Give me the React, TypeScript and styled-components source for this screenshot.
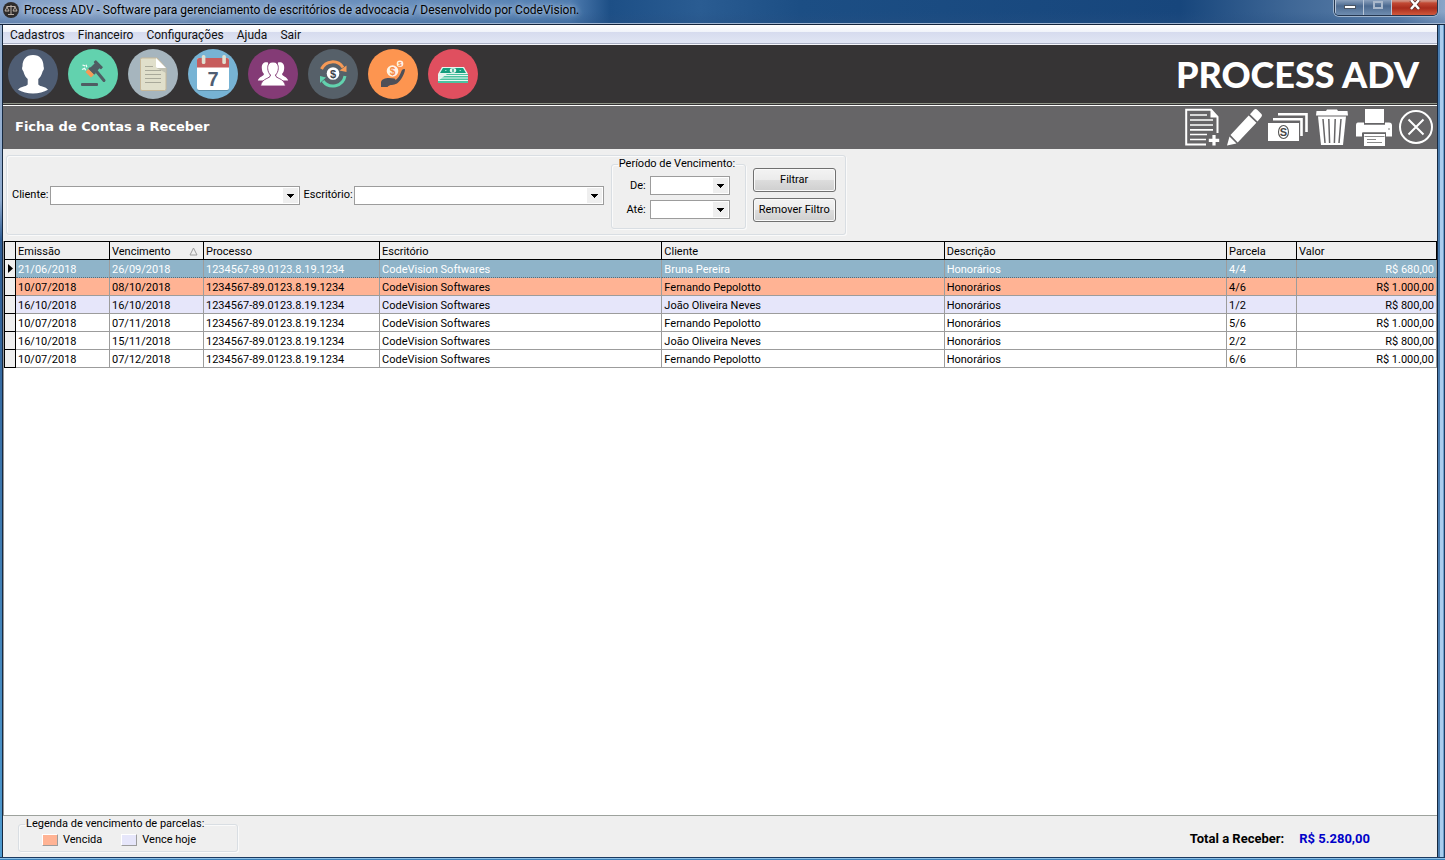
import React from "react";
import styled, { createGlobalStyle, css } from "styled-components";

const ui = `Roboto, "Liberation Sans", Arial, sans-serif`;

const GlobalStyle = createGlobalStyle`
  *, *::before, *::after { box-sizing: border-box; }
  body { margin: 0; font: 11px/14px ${ui}; color: #000; background: #efefef; }
  button, input, select { font: inherit; color: inherit; }
`;

const Window = styled.div`
  min-height: 100vh;
  display: flex;
  flex-direction: column;
  padding: 0 8px 3px 3px;
  background:
    linear-gradient(180deg, #1c3a60 0 1px, #8ec0e6 1px 2px, #3a80b8 2px 3px) bottom / 100% 3px no-repeat,
    linear-gradient(90deg, transparent 0 2px, #16283f 2px 3px) left / 3px 100% no-repeat,
    linear-gradient(180deg, #8aa4c8 0, #9db4d2 20px, #8fabcf 200px, #2f5d94 240px, #4f9bd0 100%) left / 3px 100% no-repeat,
    linear-gradient(90deg, #16283f 0 1px, #4a7db0 1px 3px, #a9cdee 3px 6px, #6f9fcb 6px 7px, #1c3a60 7px 8px) right / 8px 100% no-repeat;
`;

const TitleBar = styled.header`
  height: 25px;
  margin: 0 -8px 0 -3px;
  padding: 0 7px 0 3px;
  display: flex;
  align-items: flex-start;
  gap: 5px;
  border-bottom: 1px solid #14243c;
  box-shadow: inset 0 -1px #a3b8d3;
  background:
    linear-gradient(180deg, transparent 12px, rgba(40, 80, 130, 0.35)),
    linear-gradient(90deg, #7f9bc3 0, #92abcd 120px, #6f92bf 300px, #5f88b8 480px, #4f7cb0 570px, #1d4f86 610px, #2a5c92 700px, #1c4e84 800px, #17467c 1180px, #3f6796 1290px, #5f82ac 1400px, #8aa5c8 100%);
`;

const AppMark = styled.svg`
  width: 16px;
  height: 16px;
  margin-top: 2px;
`;

const Title = styled.h1`
  margin: 0;
  flex: 1;
  font: 400 12px/20px ${ui};
  text-shadow: 0 0 5px rgba(215, 228, 243, 0.9), 0 0 8px rgba(200, 217, 237, 0.8);
`;

const WindowControls = styled.div`
  display: flex;
  height: 16px;
  border: 1px solid #24364f;
  border-top: 0;
  border-radius: 0 0 5px 5px;
  box-shadow: 0 0 0 1px #9fb4cd;
  overflow: hidden;
`;

const ControlButton = styled.button<{ $close?: boolean }>`
  width: ${(p) => (p.$close ? 46 : 28)}px;
  padding: 0;
  border: 0;
  border-left: 1px solid #b8c6d8;
  display: flex;
  justify-content: center;
  background: ${(p) =>
    p.$close
      ? "linear-gradient(180deg, #d08f80 0 1px, #c24a35 3px, #a92c1c 8px, #d0583c 100%)"
      : "linear-gradient(180deg, #8aa0bc, #4c6a90 6px, #6f8db0 100%)"};
`;

const MenuBar = styled.nav`
  height: 20px;
  display: flex;
  gap: 13px;
  padding: 0 7px;
  border-bottom: 1px solid #f7f8fc;
  box-shadow: inset 0 -1px #aab0c4;
  background: linear-gradient(180deg, #fff 0, #f0f3fa 7px, #d6dbee 7px, #e2e7f5 100%);
`;

const MenuItem = styled.a`
  color: #111;
  font: 12px/20px ${ui};
  text-decoration: none;
`;

const Toolbar = styled.div`
  height: 60px;
  display: flex;
  align-items: center;
  justify-content: space-between;
  padding: 0 18px 2px 5px;
  background: #363435;
  box-shadow: inset 0 -1px #363435, inset 0 -2px #8e9387;
`;

const Shortcuts = styled.div`
  display: flex;
  gap: 10px;
`;

const RoundButton = styled.button`
  width: 50px;
  height: 50px;
  padding: 0;
  border: 0;
  border-radius: 50%;
  background: none;
  svg { display: block; width: 50px; height: 50px; }
`;

const Brand = styled.div`
  color: #fff;
  font: 900 36px/48px Lato, sans-serif;
`;

const FormHeader = styled.div`
  height: 44px;
  display: flex;
  align-items: center;
  justify-content: space-between;
  padding: 0 3px 1px 12px;
  background: #666567;
  border-top: 1px solid #fff;
`;

const FormTitle = styled.h2`
  margin: 0;
  color: #fff;
  font: 700 13px/16px "DejaVu Sans", Verdana, sans-serif;
`;

const Actions = styled.div`
  display: flex;
  gap: 6px;
`;

const ActionButton = styled.button<{ $wide?: boolean }>`
  width: ${(p) => (p.$wide ? 40 : 36)}px;
  height: 38px;
  padding: 0;
  border: 0;
  background: none;
  svg { display: block; width: 100%; height: 38px; }
`;

const FilterArea = styled.div`
  height: 92px;
  display: flex;
  align-items: flex-start;
  padding: 6px 3px;
  background: #efefef;
`;

const groupFrame = css`
  border: 1px solid #d9dee3;
  border-radius: 3px;
  box-shadow: inset 1px 1px #fafafa, 1px 1px #fafafa;
`;

const FilterGroup = styled.form`
  ${groupFrame}
  height: 80px;
  display: flex;
  align-items: center;
  gap: 7px;
  padding: 0 9px 0 5px;
`;

const FieldPair = styled.div`
  display: flex;
  gap: 4px;
`;

const Field = styled.div`
  display: flex;
  align-items: center;
  justify-content: flex-end;
  gap: 1px;
`;

const ComboBox = styled.div<{ $width: number }>`
  position: relative;
  width: ${(p) => p.$width}px;
  select {
    display: block;
    width: 100%;
    height: 19px;
    padding: 0 20px 0 3px;
    appearance: none;
    background: #fff;
    border: 1px solid #9c9c9c;
    border-radius: 0;
  }
  svg {
    position: absolute;
    top: 2px;
    right: 2px;
    width: 15px;
    height: 15px;
    background: #efefef;
    pointer-events: none;
  }
`;

const Period = styled.fieldset`
  ${groupFrame}
  width: 135px;
  min-width: 0;
  height: 72px;
  margin: 1px 0 0;
  padding: 5px 15px 0 6px;
  display: flex;
  flex-direction: column;
  gap: 5px;
  align-self: flex-start;
  legend { padding: 0 1px; white-space: nowrap; }
  ${Field} { gap: 4px; }
`;

const FilterButtons = styled.div`
  display: flex;
  flex-direction: column;
  gap: 6px;
`;

const PushButton = styled.button`
  width: 83px;
  height: 24px;
  padding: 0;
  border: 1px solid #707070;
  border-radius: 3px;
  box-shadow: inset 0 0 0 1px #fafafa;
  background: linear-gradient(180deg, #f3f3f3, #ebebeb 50%, #dddddd 50%, #cfcfcf);
`;

const GridArea = styled.main`
  flex: 1;
  padding-left: 1px;
  background: #fff;
  box-shadow: inset 1px 0 #9a9a9a;
  border-bottom: 1px solid #9da29d;
`;

const Grid = styled.table`
  width: 100%;
  table-layout: fixed;
  border-collapse: separate;
  border-spacing: 0;
  border-left: 1px solid #000;
  border-top: 1px solid #000;
  td, th {
    height: 18px;
    padding: 2px 2px 0;
    font-weight: 400;
    text-align: left;
    white-space: nowrap;
    overflow: hidden;
  }
`;

const Col = styled.col<{ $width?: number }>`
  width: ${(p) => (p.$width ? `${p.$width}px` : "auto")};
`;

const HeadCell = styled.th`
  background: #efefef;
  border-right: 1px solid #000;
  border-bottom: 1px solid #000;
`;

const SortLabel = styled.div`
  display: flex;
  align-items: center;
  justify-content: space-between;
  padding-right: 3px;
`;

type RowKind = "selected" | "overdue" | "today" | "normal";
const rowColors: Record<RowKind, string> = {
  selected: "#8fb4c9",
  overdue: "#ffb394",
  today: "#e6e6fa",
  normal: "#fff",
};

const Row = styled.tr<{ $kind: RowKind }>`
  background: ${(p) => rowColors[p.$kind]};
  color: ${(p) => (p.$kind === "selected" ? "#fff" : "#000")};
  td {
    border-right: 1px solid #9c9c9c;
    border-bottom: 1px ${(p) => (p.$kind === "selected" ? "dotted #5c6b74" : "solid #9c9c9c")};
  }
  td:first-child {
    background: #efefef;
    border-right-color: #000;
    border-bottom: 1px solid #000;
    padding: 0 0 0 2px;
  }
  td:last-child { text-align: right; }
  svg { display: block; }
`;

const Footer = styled.footer`
  height: 41px;
  display: flex;
  align-items: flex-start;
  justify-content: space-between;
  padding: 1px 67px 0 15px;
  background: #efefef;
`;

const Legend = styled.fieldset`
  ${groupFrame}
  width: 220px;
  height: 35px;
  margin: 0;
  padding: 1px 0 0 23px;
  display: flex;
  gap: 19px;
  legend { padding: 0 1px; margin-left: -17px; }
`;

const LegendItem = styled.div`
  display: flex;
  align-items: center;
  gap: 5px;
  height: 16px;
`;

const Swatch = styled.span<{ $kind: RowKind }>`
  width: 16px;
  height: 12px;
  background: ${(p) => rowColors[p.$kind]};
  border: 1px solid #fff;
  border-right-color: #9c9c9c;
  border-bottom-color: #9c9c9c;
`;

const Total = styled.div`
  display: flex;
  gap: 15px;
  margin-top: 15px;
  font-size: 13px;
  font-weight: 700;
`;

const TotalValue = styled.output`
  color: #0000c8;
`;

const icon50 = { viewBox: "0 0 50 50", "aria-hidden": true } as const;

const PersonIcon = () => (
  <svg {...icon50}>
    <circle cx="25" cy="25" r="25" fill="#4f5d73" />
    <path fill="#fff" d="M25 6c-7 0-10.500 4.800-10.500 11 0 .8-.7 1.800-.3 3.200.3 1.100 1 1.500 1.200 2.200 1 3.800 2.600 6 4.300 7.600v5.500c-2 2.500-7.500 1.800-9.700 5.300C14 43 19.500 44.500 25 44.500S36 43 40 40.800c-2.200-3.500-7.700-2.800-9.700-5.300V30c1.700-1.600 3.300-3.800 4.300-7.600.2-.7.900-1.100 1.200-2.200.4-1.400-.3-2.400-.3-3.200C35.500 10.800 32 6 25 6z" />
  </svg>
);

const GavelIcon = () => (
  <svg {...icon50}>
    <circle cx="25" cy="25" r="25" fill="#62d2ae" />
    <rect x="13" y="34" width="17" height="3" rx="1" fill="#4f5d63" />
    <g fill="#4f5d63">
      <path d="M27 20.500L36 31.500" stroke="#4f5d63" strokeWidth="3" strokeLinecap="round" />
      <g transform="rotate(-45 26 20)">
        <rect x="22" y="16.500" width="10" height="7" />
        <rect x="30.500" y="14.800" width="3.200" height="10.400" rx=".8" />
        <rect x="22" y="15.800" width="2.600" height="8.400" />
        <rect x="17.800" y="16" width="4.200" height="8" rx=".8" fill="#f59a57" />
      </g>
    </g>
    <path d="M14.500 16l2.500.8M18 15.800l.8 2.400M14 20.500l2.600-1.200 1 2" fill="none" stroke="#f3fbf7" strokeWidth="1.300" />
  </svg>
);

const PaperIcon = () => (
  <svg {...icon50}>
    <circle cx="25" cy="25" r="25" fill="#a6b5be" />
    <path d="M14 9h15l9 10v21a1.500 1.500 0 0 1-1.500 1.500h-22.500a1.500 1.500 0 0 1-1.500-1.500V10.500A1.500 1.500 0 0 1 14 9z" fill="#e0dfcb" stroke="#c8b99a" />
    <path d="M28 9l10 10V24l-9.500-5z" fill="#c1c1b2" />
    <path d="M28 9l10 10h-8.500A1.500 1.500 0 0 1 28 17.500z" fill="#fff" />
    <path d="M17 17.500h8M17 21.500h16M17 25.500h16M17 29.500h16M17 33.500h16" stroke="#a9a99a" strokeWidth="1.200" />
  </svg>
);

const CalendarIcon = () => (
  <svg {...icon50}>
    <circle cx="25" cy="25" r="25" fill="#77b3d4" />
    <rect x="9" y="11" width="32" height="31" rx="2" fill="#5f8fa9" />
    <rect x="9" y="9" width="32" height="32" rx="2" fill="#fff" />
    <path d="M9 18.500V11a2 2 0 0 1 2-2h28a2 2 0 0 1 2 2v7.500z" fill="#c75c5c" />
    <rect x="13.800" y="6" width="3.600" height="9" rx="1.500" fill="#e0e0d1" />
    <rect x="34.300" y="6" width="3.600" height="9" rx="1.500" fill="#e0e0d1" />
    <text x="25" y="37" textAnchor="middle" fill="#4f5d73" fontFamily="Liberation Sans, sans-serif" fontWeight="700" fontSize="20">7</text>
  </svg>
);

const PeopleIcon = () => (
  <svg {...icon50}>
    <circle cx="25" cy="25" r="25" fill="#843b76" />
    <g fill="#fff">
      <path d="M20 13.500c-3.500-1-6.500 1-6.200 5.500.1 2.500.7 4.500 2.200 6-.3 2.500-5 2.500-6.200 6.500h7.500L22 27z" />
      <path d="M30 13.500c3.500-1 6.500 1 6.200 5.500-.1 2.500-.7 4.500-2.200 6 .3 2.500 5 2.500 6.200 6.500h-7.500L28 27z" />
      <path stroke="#843b76" strokeWidth=".9" d="M25 13c-4 0-5.700 3-5.300 6.800.3 2.700 1.200 4.700 2.800 6.200.1 4-8.500 2.500-10 11h25c-1.500-8.500-10.100-7-10-11 1.600-1.500 2.500-3.500 2.800-6.200C30.700 16 29 13 25 13z" />
    </g>
  </svg>
);

const CycleIcon = () => (
  <svg {...icon50}>
    <circle cx="25" cy="25" r="25" fill="#566069" />
    <g fill="none" strokeWidth="3">
      <path d="M13.500 20A12.300 12.300 0 0 1 35 18.500" stroke="#f59a57" />
      <path d="M37 27A12.300 12.300 0 0 1 15 32" stroke="#62d2ae" />
    </g>
    <path d="M31.500 21.500l7-5v6.500z" fill="#f59a57" />
    <path d="M12 27l6 1.500-6 5.500z" fill="#62d2ae" />
    <circle cx="25" cy="24.500" r="6.300" fill="#fff" />
    <text x="25" y="28.500" textAnchor="middle" fill="#3c444b" fontFamily="Liberation Sans, sans-serif" fontWeight="700" fontSize="11">$</text>
  </svg>
);

const HandCoinIcon = () => (
  <svg {...icon50}>
    <circle cx="25" cy="25" r="25" fill="#fd9550" />
    <path fill="#4e4f57" d="M13 38v-5c1-3 4-4 8-4l5 .5c1.500.3 2 1.500 1 2 3-2 5-5 6.500-9.500.5-1.800 3-2.500 3.500-1.500-.3 4-4 11.500-8 14-3.500 2-7 .5-9.500 3.500z" />
    <g fontFamily="Liberation Sans, sans-serif" fontWeight="700" textAnchor="middle" fill="#f58a45">
      <circle cx="24.500" cy="22" r="5.800" fill="#fff3e6" />
      <text x="24.500" y="25.700" fontSize="10">$</text>
      <circle cx="32" cy="14.700" r="3.300" fill="#fff3e6" />
      <text x="32" y="17" fontSize="6">$</text>
    </g>
  </svg>
);

const CashIcon = () => (
  <svg {...icon50}>
    <circle cx="25" cy="25" r="25" fill="#e04f5f" />
    <path d="M14 18h22l4 7H10z" fill="#e5f5ee" />
    <path d="M15 19h20l3 5H12z" fill="#159d7d" />
    <rect x="10" y="25" width="30" height="9" fill="#e0f4ec" />
    <path d="M10 34V32l9-7h21v9z" fill="#4cc2a0" />
    <path d="M10 26.500h30M10 29h30M10 31.500h30" stroke="#e8f7f1" strokeWidth="1" />
    <ellipse cx="25" cy="21.500" rx="3.200" ry="2.400" fill="#e5f5ee" />
    <path d="M25 19.800v3.400" stroke="#159d7d" strokeWidth="1.300" />
    <path d="M17 21.500h1.500M31.500 21.500H33" stroke="#9ad9c6" />
  </svg>
);

const NewIcon = () => (
  <svg viewBox="0 0 36 38" aria-hidden="true">
    <g fill="none" stroke="#fff" strokeWidth="2">
      <path d="M22 36.500H2.200V1.800H27l6.500 7V25" />
      <path d="M26.500 2v7.500h7z" fill="#fff" stroke="none" />
      <path d="M6 7h17M6 12h23M6 17h23M6 21.800h23M6 26.500h17M6 31.500h16" strokeWidth="1.700" />
      <path d="M30 27v10.500M24.800 32.300h10.400" strokeWidth="3.200" />
    </g>
  </svg>
);

const PencilIcon = () => (
  <svg viewBox="0 0 36 38" aria-hidden="true">
    <path fill="#fff" d="M1 37.500l2.500-9 7 7zM4.500 27L22.700 7.500l7.700 7.300L11.700 34.500z" />
    <path fill="#fff" d="M24 6.200l4-4.400c1-1 2.200-1 3.200-.1l4 4c1 1 1 2.200.1 3.200l-3.800 4.700z" />
  </svg>
);

const NotesIcon = () => (
  <svg viewBox="0 0 40 38" aria-hidden="true">
    <g fill="none" stroke="#fff" strokeWidth="2.600">
      <path d="M10 6.300h28.500V24" />
      <path d="M5 11.300h28.500V28" />
    </g>
    <path d="M0 15h31v18H0z" fill="#fff" />
    <ellipse cx="15.500" cy="24" rx="5" ry="6.500" fill="none" stroke="#555" strokeWidth="1.100" />
    <text x="15.500" y="28" textAnchor="middle" fill="#444" fontFamily="Liberation Sans, sans-serif" fontWeight="700" fontSize="11">S</text>
  </svg>
);

const TrashIcon = () => (
  <svg viewBox="0 0 36 38" aria-hidden="true">
    <path d="M13 1.500h10l1 1.500h9.500l.5 4.500H2L2.500 3H12z" fill="#fff" />
    <path d="M4 8.500h28l-3 28.500H7z" fill="#fff" />
    <path d="M9 11l2 24M14.800 11l.8 24M21.200 11l-.8 24M27 11l-2 24" stroke="#666567" strokeWidth="1.500" />
  </svg>
);

const PrinterIcon = () => (
  <svg viewBox="0 0 36 38" aria-hidden="true">
    <path d="M9 1h19v14H9z" fill="#fff" />
    <path d="M2 14.500h6v2.200h21v-2.200h4q3 0 3 3v11h-6v-4H6v4H0v-11q0-3 2-3z" fill="#fff" />
    <path d="M8 26h21v12H8z" fill="#fff" />
    <path d="M7 24.500h23M8.500 28.500h20M11 31.500h9M11 34.500h15" stroke="#8a8a8a" />
    <circle cx="33" cy="21" r=".8" fill="#666" />
  </svg>
);

const CloseIcon = () => (
  <svg viewBox="0 0 36 38" aria-hidden="true">
    <g fill="none" stroke="#fff" strokeWidth="2">
      <circle cx="18" cy="19" r="16" />
      <path d="M10.500 11.500l15 15M25.500 11.500l-15 15" />
    </g>
  </svg>
);

const Combo = ({ id, width }: { id: string; width: number }) => (
  <ComboBox $width={width}>
    <select id={id} defaultValue="">
      <option value="" />
    </select>
    <svg viewBox="0 0 15 15" aria-hidden="true">
      <path d="M4 6h7v1h-1v1H9v1H8v1H7V9H6V8H5V7H4z" />
    </svg>
  </ComboBox>
);

const shortcuts = [
  { name: "Clientes", Icon: PersonIcon },
  { name: "Processos", Icon: GavelIcon },
  { name: "Documentos", Icon: PaperIcon },
  { name: "Agenda", Icon: CalendarIcon },
  { name: "Equipe", Icon: PeopleIcon },
  { name: "Movimento", Icon: CycleIcon },
  { name: "Contas a Receber", Icon: HandCoinIcon },
  { name: "Caixa", Icon: CashIcon },
];

const actions = [
  { name: "Incluir", Icon: NewIcon },
  { name: "Editar", Icon: PencilIcon },
  { name: "Receber", Icon: NotesIcon, wide: true },
  { name: "Excluir", Icon: TrashIcon },
  { name: "Imprimir", Icon: PrinterIcon },
  { name: "Fechar", Icon: CloseIcon },
];

const process = "1234567-89.0123.8.19.1234";
const office = "CodeVision Softwares";
const rows: { kind: RowKind; cells: string[] }[] = [
  { kind: "selected", cells: ["21/06/2018", "26/09/2018", process, office, "Bruna Pereira", "Honorários", "4/4", "R$ 680,00"] },
  { kind: "overdue", cells: ["10/07/2018", "08/10/2018", process, office, "Fernando Pepolotto", "Honorários", "4/6", "R$ 1.000,00"] },
  { kind: "today", cells: ["16/10/2018", "16/10/2018", process, office, "João Oliveira Neves", "Honorários", "1/2", "R$ 800,00"] },
  { kind: "normal", cells: ["10/07/2018", "07/11/2018", process, office, "Fernando Pepolotto", "Honorários", "5/6", "R$ 1.000,00"] },
  { kind: "normal", cells: ["16/10/2018", "15/11/2018", process, office, "João Oliveira Neves", "Honorários", "2/2", "R$ 800,00"] },
  { kind: "normal", cells: ["10/07/2018", "07/12/2018", process, office, "Fernando Pepolotto", "Honorários", "6/6", "R$ 1.000,00"] },
];

export default function App() {
  return (
    <>
      <GlobalStyle />
      <Window>
        <TitleBar>
          <AppMark viewBox="0 0 16 16" aria-hidden="true">
            <circle cx="8" cy="8" r="8" fill="#2f2c2b" />
            <path d="M8 3v9M3.500 4.500h9M5 12.500h6M4 5L2 9h4zM12 5l-2 4h4z" fill="none" stroke="#b9aea6" />
          </AppMark>
          <Title>Process ADV - Software para gerenciamento de escritórios de advocacia / Desenvolvido por CodeVision.</Title>
          <WindowControls>
            <ControlButton type="button" aria-label="Minimizar">
              <svg width="14" height="14" aria-hidden="true"><rect x="1.500" y="5.500" width="11" height="3" fill="#fff" stroke="#4b5563" /></svg>
            </ControlButton>
            <ControlButton type="button" aria-label="Maximizar">
              <svg width="12" height="14" aria-hidden="true"><rect x="2" y="2" width="8" height="6" fill="none" stroke="#a9b8cb" strokeWidth="2" /></svg>
            </ControlButton>
            <ControlButton type="button" aria-label="Fechar janela" $close>
              <svg width="14" height="14" aria-hidden="true">
                <path d="M3 0l8 9M11 0l-8 9" stroke="#59312d" strokeWidth="4" />
                <path d="M3 0l8 9M11 0l-8 9" stroke="#fff" strokeWidth="2.500" />
              </svg>
            </ControlButton>
          </WindowControls>
        </TitleBar>
        <MenuBar>
          {["Cadastros", "Financeiro", "Configurações", "Ajuda", "Sair"].map((m) => (
            <MenuItem key={m} href="#">{m}</MenuItem>
          ))}
        </MenuBar>
        <Toolbar>
          <Shortcuts>
            {shortcuts.map(({ name, Icon }) => (
              <RoundButton key={name} type="button" aria-label={name}><Icon /></RoundButton>
            ))}
          </Shortcuts>
          <Brand>PROCESS ADV</Brand>
        </Toolbar>
        <FormHeader>
          <FormTitle>Ficha de Contas a Receber</FormTitle>
          <Actions>
            {actions.map(({ name, Icon, wide }) => (
              <ActionButton key={name} type="button" aria-label={name} $wide={wide}><Icon /></ActionButton>
            ))}
          </Actions>
        </FormHeader>
        <FilterArea>
          <FilterGroup>
            <FieldPair>
              <Field>
                <label htmlFor="cliente">Cliente:</label>
                <Combo id="cliente" width={250} />
              </Field>
              <Field>
                <label htmlFor="escritorio">Escritório:</label>
                <Combo id="escritorio" width={250} />
              </Field>
            </FieldPair>
            <Period>
              <legend>Período de Vencimento:</legend>
              <Field>
                <label htmlFor="de">De:</label>
                <Combo id="de" width={80} />
              </Field>
              <Field>
                <label htmlFor="ate">Até:</label>
                <Combo id="ate" width={80} />
              </Field>
            </Period>
            <FilterButtons>
              <PushButton type="button">Filtrar</PushButton>
              <PushButton type="button">Remover Filtro</PushButton>
            </FilterButtons>
          </FilterGroup>
        </FilterArea>
        <GridArea>
          <Grid>
            <colgroup>
              <Col $width={11} />
              <Col $width={94} />
              <Col $width={94} />
              <Col $width={176} />
              <Col />
              <Col />
              <Col />
              <Col $width={70} />
              <Col $width={140} />
            </colgroup>
            <thead>
              <tr>
                <HeadCell aria-label="Registro atual" />
                <HeadCell>Emissão</HeadCell>
                <HeadCell aria-sort="ascending">
                  <SortLabel>
                    Vencimento
                    <svg width="9" height="9" aria-hidden="true"><path d="M4.500 1L8 8H1z" fill="none" stroke="#9c9c9c" /></svg>
                  </SortLabel>
                </HeadCell>
                {["Processo", "Escritório", "Cliente", "Descrição", "Parcela", "Valor"].map((h) => (
                  <HeadCell key={h}>{h}</HeadCell>
                ))}
              </tr>
            </thead>
            <tbody>
              {rows.map(({ kind, cells }, i) => (
                <Row key={i} $kind={kind}>
                  <td>{kind === "selected" && <svg width="6" height="9" aria-hidden="true"><path d="M1 0l5 4.500L1 9z" /></svg>}</td>
                  {cells.map((c, j) => (
                    <td key={j}>{c}</td>
                  ))}
                </Row>
              ))}
            </tbody>
          </Grid>
        </GridArea>
        <Footer>
          <Legend>
            <legend>Legenda de vencimento de parcelas:</legend>
            <LegendItem><Swatch $kind="overdue" />Vencida</LegendItem>
            <LegendItem><Swatch $kind="today" />Vence hoje</LegendItem>
          </Legend>
          <Total>
            <span>Total a Receber:</span>
            <TotalValue>R$ 5.280,00</TotalValue>
          </Total>
        </Footer>
      </Window>
    </>
  );
}
